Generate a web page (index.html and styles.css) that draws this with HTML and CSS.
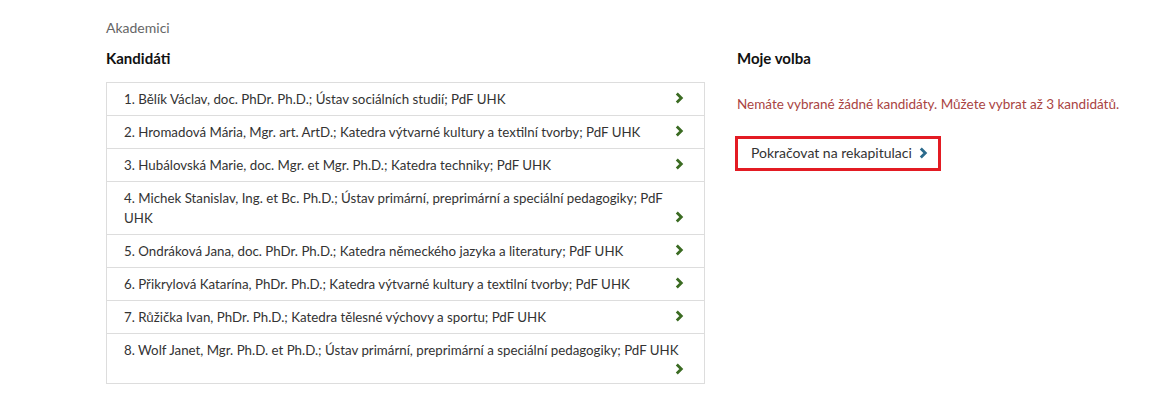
FILE: index.html
```html
<!DOCTYPE html>
<html lang="cs">
<head>
  <meta charset="UTF-8" />
  <meta name="viewport" content="width=device-width, initial-scale=1.0" />
  <title>Volba - Akademici</title>
  <link rel="stylesheet" href="styles.css">
</head>
<body>
  <div class="page">
    <div class="crumb">Akademici</div>

    <div class="columns">
      <div class="col-left">
        <h2>Kandidáti</h2>
        <ul class="candidates">
          <li>1. Bělík Václav, doc. PhDr. Ph.D.; Ústav sociálních studií; PdF UHK<span class="chev"><svg width="9" height="12" viewBox="0 0 9 12"><path d="M1.8 1.5 L6.3 6 L1.8 10.5" /></svg></span></li>
          <li>2. Hromadová Mária, Mgr. art. ArtD.; Katedra výtvarné kultury a textilní tvorby; PdF UHK<span class="chev"><svg width="9" height="12" viewBox="0 0 9 12"><path d="M1.8 1.5 L6.3 6 L1.8 10.5" /></svg></span></li>
          <li>3. Hubálovská Marie, doc. Mgr. et Mgr. Ph.D.; Katedra techniky; PdF UHK<span class="chev"><svg width="9" height="12" viewBox="0 0 9 12"><path d="M1.8 1.5 L6.3 6 L1.8 10.5" /></svg></span></li>
          <li>4. Michek Stanislav, Ing. et Bc. Ph.D.; Ústav primární, preprimární a speciální pedagogiky; PdF UHK<span class="chev"><svg width="9" height="12" viewBox="0 0 9 12"><path d="M1.8 1.5 L6.3 6 L1.8 10.5" /></svg></span></li>
          <li>5. Ondráková Jana, doc. PhDr. Ph.D.; Katedra německého jazyka a literatury; PdF UHK<span class="chev"><svg width="9" height="12" viewBox="0 0 9 12"><path d="M1.8 1.5 L6.3 6 L1.8 10.5" /></svg></span></li>
          <li>6. Přikrylová Katarína, PhDr. Ph.D.; Katedra výtvarné kultury a textilní tvorby; PdF UHK<span class="chev"><svg width="9" height="12" viewBox="0 0 9 12"><path d="M1.8 1.5 L6.3 6 L1.8 10.5" /></svg></span></li>
          <li>7. Růžička Ivan, PhDr. Ph.D.; Katedra tělesné výchovy a sportu; PdF UHK<span class="chev"><svg width="9" height="12" viewBox="0 0 9 12"><path d="M1.8 1.5 L6.3 6 L1.8 10.5" /></svg></span></li>
          <li>8. Wolf Janet, Mgr. Ph.D. et Ph.D.; Ústav primární, preprimární a speciální pedagogiky; PdF UHK<span class="chev"><svg width="9" height="12" viewBox="0 0 9 12"><path d="M1.8 1.5 L6.3 6 L1.8 10.5" /></svg></span></li>
        </ul>
      </div>

      <div class="col-right">
        <h2>Moje volba</h2>
        <p class="empty">Nemáte vybrané žádné kandidáty. Můžete vybrat až 3 kandidátů.</p>
        <a class="next-btn" href="#">Pokračovat na rekapitulaci <svg width="9" height="12" viewBox="0 0 9 12"><path d="M1.8 1.5 L6.3 6 L1.8 10.5" /></svg></a>
      </div>
    </div>
  </div>
</body>
</html>
```

FILE: styles.css
```css
body {
  margin: 0;
  font-family: 'Lato', 'Noto Sans', sans-serif;
  font-size: 13.3px;
  color: #333;
  background: #fff;
}

.page {
  padding: 18px 0 0 106px;
}

.crumb {
  color: #666;
  font-size: 14px;
  line-height: 20px;
}

.columns {
  display: flex;
  gap: 32px;
}

.col-left {
  width: 599px;
  flex-shrink: 0;
}

.col-right {
  width: 400px;
  flex-shrink: 0;
}

h2 {
  font-size: 15px;
  font-weight: bold;
  color: #111;
  margin: 10px 0 14px;
  line-height: 20px;
}

.candidates {
  list-style: none;
  margin: 0;
  padding: 0;
  border: 1px solid #ddd;
}

.candidates li {
  display: flow-root;
  padding: 6px 20px 6px 17px;
  line-height: 20px;
  border-top: 1px solid #ddd;
}

.candidates li:first-child {
  border-top: none;
}

.chev {
  float: right;
  margin: 3px 0 2px;
  line-height: 0;
}

.chev svg path,
.next-btn svg path {
  fill: none;
  stroke: #3b6b22;
  stroke-width: 2.8;
}

.empty {
  color: #a94442;
  font-size: 13.5px;
  margin: 26px 0 22px;
  line-height: 20px;
}

.next-btn {
  display: inline-block;
  margin-left: -2px;
  padding: 4px 10px 5px 13px;
  border: 3px solid #e31b23;
  color: #333;
  font-size: 14px;
  text-decoration: none;
  line-height: 20px;
}

.next-btn svg {
  margin-left: 4px;
  vertical-align: -1px;
}

.next-btn svg path {
  stroke: #2b6a8c;
}
```
